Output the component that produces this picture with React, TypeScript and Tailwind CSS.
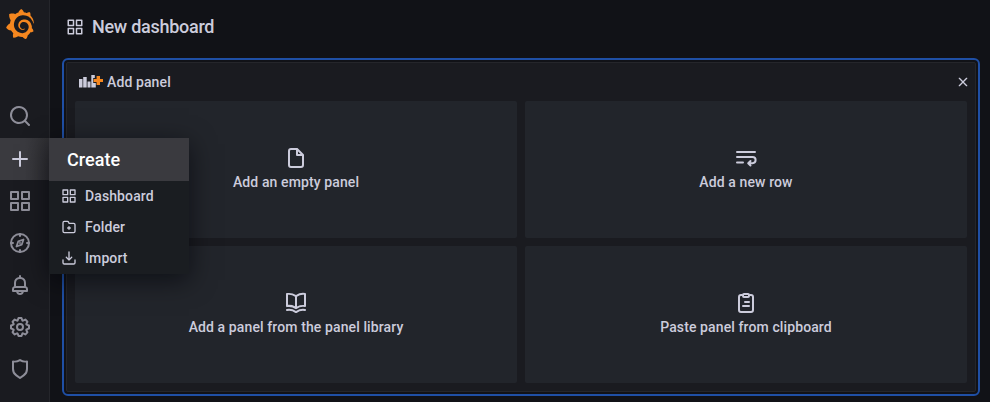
import type { ReactNode } from 'react';
import { SiGrafana } from 'react-icons/si';

const paths = {
  apps: 'M10,13H3a1,1,0,0,0-1,1v7a1,1,0,0,0,1,1h7a1,1,0,0,0,1-1V14A1,1,0,0,0,10,13ZM9,20H4V15H9ZM21,2H14a1,1,0,0,0-1,1v7a1,1,0,0,0,1,1h7a1,1,0,0,0,1-1V3A1,1,0,0,0,21,2ZM20,9H15V4h5Zm1,4H14a1,1,0,0,0-1,1v7a1,1,0,0,0,1,1h7a1,1,0,0,0,1-1V14A1,1,0,0,0,21,13Zm-1,7H15V15h5ZM10,2H3A1,1,0,0,0,2,3v7a1,1,0,0,0,1,1h7a1,1,0,0,0,1-1V3A1,1,0,0,0,10,2ZM9,9H4V4H9Z',
  search: 'M21.71,20.29,18,16.61A9,9,0,1,0,16.61,18l3.68,3.68a1,1,0,0,0,1.42,0A1,1,0,0,0,21.71,20.29ZM11,18a7,7,0,1,1,7-7A7,7,0,0,1,11,18Z',
  plus: 'M19,11H13V5a1,1,0,0,0-2,0v6H5a1,1,0,0,0,0,2h6v6a1,1,0,0,0,2,0V13h6a1,1,0,0,0,0-2Z',
  bell: 'M18,13.18V10a6,6,0,0,0-5-5.91V3a1,1,0,0,0-2,0V4.09A6,6,0,0,0,6,10v3.18A3,3,0,0,0,4,16v2a1,1,0,0,0,1,1H8.14a4,4,0,0,0,7.72,0H19a1,1,0,0,0,1-1V16A3,3,0,0,0,18,13.18ZM8,10a4,4,0,0,1,8,0v3H8Zm4,10a2,2,0,0,1-1.72-1h3.44A2,2,0,0,1,12,20Zm6-3H6V16a1,1,0,0,1,1-1H17a1,1,0,0,1,1,1Z',
  cog: 'M21.32,9.55l-1.89-.63.89-1.78A1,1,0,0,0,20.13,6L18,3.87a1,1,0,0,0-1.15-.19l-1.78.89-.63-1.89A1,1,0,0,0,13.5,2h-3a1,1,0,0,0-.95.68L8.92,4.57,7.14,3.68A1,1,0,0,0,6,3.87L3.87,6a1,1,0,0,0-.19,1.15l.89,1.78-1.89.63A1,1,0,0,0,2,10.5v3a1,1,0,0,0,.68.95l1.89.63-.89,1.78A1,1,0,0,0,3.87,18L6,20.13a1,1,0,0,0,1.15.19l1.78-.89.63,1.89a1,1,0,0,0,.95.68h3a1,1,0,0,0,.95-.68l.63-1.89,1.78.89A1,1,0,0,0,18,20.13L20.13,18a1,1,0,0,0,.19-1.15l-.89-1.78,1.89-.63A1,1,0,0,0,22,13.5v-3A1,1,0,0,0,21.32,9.55ZM20,12.78l-1.2.4A2,2,0,0,0,17.64,16l.57,1.14-1.1,1.1L16,17.64a2,2,0,0,0-2.79,1.16l-.4,1.2H11.22l-.4-1.2A2,2,0,0,0,8,17.64l-1.14.57-1.1-1.1L6.36,16A2,2,0,0,0,5.2,13.18L4,12.78V11.22l1.2-.4A2,2,0,0,0,6.36,8L5.79,6.89l1.1-1.1L8,6.36A2,2,0,0,0,10.82,5.2l.4-1.2h1.56l.4,1.2A2,2,0,0,0,16,6.36l1.14-.57,1.1,1.1L17.64,8a2,2,0,0,0,1.16,2.79l1.2.4ZM12,8a4,4,0,1,0,4,4A4,4,0,0,0,12,8Zm0,6a2,2,0,1,1,2-2A2,2,0,0,1,12,14Z',
  shield: 'M19.63,3.65a1,1,0,0,0-.84-.2,8,8,0,0,1-6.22-1.27,1,1,0,0,0-1.14,0A8,8,0,0,1,5.21,3.45a1,1,0,0,0-.84.2A1,1,0,0,0,4,4.43v7.45a9,9,0,0,0,3.77,7.33l3.65,2.6a1,1,0,0,0,1.16,0l3.65-2.6A9,9,0,0,0,20,11.88V4.43A1,1,0,0,0,19.63,3.65ZM18,11.88a7,7,0,0,1-2.93,5.7L12,19.77,8.93,17.58A7,7,0,0,1,6,11.88V5.58a10,10,0,0,0,6-1.39,10,10,0,0,0,6,1.39Z',
  download: 'M21,14a1,1,0,0,0-1,1v4a1,1,0,0,1-1,1H5a1,1,0,0,1-1-1V15a1,1,0,0,0-2,0v4a3,3,0,0,0,3,3H19a3,3,0,0,0,3-3V15A1,1,0,0,0,21,14Zm-9.71,1.71a1,1,0,0,0,.33.21.94.94,0,0,0,.76,0,1,1,0,0,0,.33-.21l4-4a1,1,0,0,0-1.42-1.42L13,12.59V3a1,1,0,0,0-2,0v9.59l-2.29-2.3a1,1,0,1,0-1.42,1.42Z',
  folder: 'M14,12.5H13v-1a1,1,0,0,0-2,0v1H10a1,1,0,0,0,0,2h1v1a1,1,0,0,0,2,0v-1h1a1,1,0,0,0,0-2Zm5-7H12.72l-.32-1a3,3,0,0,0-2.84-2H5a3,3,0,0,0-3,3v13a3,3,0,0,0,3,3H19a3,3,0,0,0,3-3V8.5A3,3,0,0,0,19,5.5Zm1,13a1,1,0,0,1-1,1H5a1,1,0,0,1-1-1V5.5a1,1,0,0,1,1-1H9.56a1,1,0,0,1,.95.68l.54,1.64A1,1,0,0,0,12,7.5h7a1,1,0,0,1,1,1Z',
  file: 'M20,8.94a1.31,1.31,0,0,0-.06-.27l0-.09a1.07,1.07,0,0,0-.19-.28h0l-6-6h0a1.07,1.07,0,0,0-.28-.19l-.09,0L13.06,2H7A3,3,0,0,0,4,5V19a3,3,0,0,0,3,3H17a3,3,0,0,0,3-3V9S20,9,20,8.94ZM14,5.41,16.59,8H14ZM18,19a1,1,0,0,1-1,1H7a1,1,0,0,1-1-1V5A1,1,0,0,1,7,4h5V9a1,1,0,0,0,1,1h5Z',
  book: 'M21.17,2.06A13.1,13.1,0,0,0,19,1.87a12.94,12.94,0,0,0-7,2.05,12.94,12.94,0,0,0-7-2,13.1,13.1,0,0,0-2.17.19,1,1,0,0,0-.83,1v12a1,1,0,0,0,1.17,1,10.9,10.9,0,0,1,8.25,1.91l.12.07.11,0a.91.91,0,0,0,.7,0l.11,0,.12-.07A10.9,10.9,0,0,1,20.83,16,1,1,0,0,0,22,15V3A1,1,0,0,0,21.17,2.06ZM11,15.35a12.87,12.87,0,0,0-6-1.48c-.33,0-.66,0-1,0v-10a8.69,8.69,0,0,1,1,0,10.86,10.86,0,0,1,6,1.8Zm9-1.44c-.34,0-.67,0-1,0a12.87,12.87,0,0,0-6,1.48V5.67a10.86,10.86,0,0,1,6-1.8,8.69,8.69,0,0,1,1,0Zm1.17,4.15A13.1,13.1,0,0,0,19,17.87a12.94,12.94,0,0,0-7,2.05,12.94,12.94,0,0,0-7-2.05,13.1,13.1,0,0,0-2.17.19A1,1,0,0,0,2,19.21a1,1,0,0,0,1.17.79,10.9,10.9,0,0,1,8.25,1.91,1,1,0,0,0,1.16,0A10.9,10.9,0,0,1,20.83,20,1,1,0,0,0,22,19.21,1,1,0,0,0,21.17,18.06Z',
};

function Icon({ name, className }: { name: keyof typeof paths; className: string }) {
  return (
    <svg viewBox="0 0 24 24" fill="currentColor" className={className} aria-hidden="true">
      <path d={paths[name]} />
    </svg>
  );
}

function StrokeIcon({ className, children }: { className: string; children: ReactNode }) {
  return (
    <svg
      viewBox="0 0 24 24"
      fill="none"
      stroke="currentColor"
      strokeWidth="2"
      strokeLinecap="round"
      strokeLinejoin="round"
      className={className}
      aria-hidden="true"
    >
      {children}
    </svg>
  );
}

function NavItem({ children, active = false }: { children: ReactNode; active?: boolean }) {
  return (
    <div
      className={
        active
          ? 'flex h-[42px] items-center bg-linear-to-r from-[#3a3a3f] from-50% to-[#303034] pl-2 text-[#ccccdc]'
          : 'flex h-[42px] items-center pl-2 text-[#8e8e99]'
      }
    >
      {children}
    </div>
  );
}

function MenuItem({ icon, label }: { icon: keyof typeof paths; label: string }) {
  return (
    <div className="flex h-[31px] items-center gap-2 pb-0.5 pl-3">
      <Icon name={icon} className="size-4" />
      <span>{label}</span>
    </div>
  );
}

function Tile({ icon, label }: { icon: ReactNode; label: string }) {
  return (
    <button className="flex flex-col items-center justify-center rounded-xs bg-[#22252b] pb-px">
      {icon}
      <span className="mt-px leading-[22px]">{label}</span>
    </button>
  );
}

function PanelAddIcon() {
  return (
    <svg viewBox="0 0 24 16" className="h-4 w-6" aria-hidden="true">
      <g fill="#ccccdc">
        <rect x="0" y="5" width="3.5" height="8.5" />
        <rect x="4.2" y="3" width="3.5" height="10.5" />
        <rect x="8.5" y="7.5" width="3" height="6" />
        <path d="M12.3 1h3.5v3h-1.6v5h2.600v4.500h-4.500z" />
      </g>
      <path d="M17.600 2h3.400v3h3v3h-3v3h-3.400V8h-3V5h3z" fill="#f5871f" />
    </svg>
  );
}

export default function App() {
  return (
    <div className="flex h-[402px] w-[990px] overflow-hidden bg-[#111217] font-[Roboto,sans-serif] text-sm font-medium tracking-[0.11px] text-[#ccccdc]">
      <nav className="relative z-10 w-[50px] shrink-0 border-r border-[#25262b] bg-[#1a1b20]">
        <div className="flex h-[95px] pt-[9px] pl-[5px]">
          <SiGrafana className="size-[30px] text-[#f5871f]" />
        </div>
        <NavItem><Icon name="search" className="size-6" /></NavItem>
        <div className="mt-px">
          <NavItem active><Icon name="plus" className="size-6" /></NavItem>
        </div>
        <NavItem><Icon name="apps" className="size-6" /></NavItem>
        <NavItem>
          <StrokeIcon className="size-6">
            <circle cx="12" cy="12" r="9" />
            <path d="M12 3v2M12 19v2M3 12h2M19 12h2" />
            <path d="m15.500 8.500-1.800 5.200-5.200 1.800 1.800-5.200zM12 12h.01" strokeWidth="1.8" />
          </StrokeIcon>
        </NavItem>
        <NavItem><Icon name="bell" className="size-6" /></NavItem>
        <NavItem><Icon name="cog" className="size-6" /></NavItem>
        <NavItem><Icon name="shield" className="size-6" /></NavItem>
        <div className="absolute top-[138px] left-[49px] h-[136px] w-[140px] bg-[#1a1d21] shadow-[0_6px_24px_rgba(1,4,9,0.6)]">
          <div className="flex h-[43px] items-center bg-[#3a3a3f] pl-[18px] text-lg font-medium tracking-[0.05px] text-white">
            Create
          </div>
          <MenuItem icon="apps" label="Dashboard" />
          <MenuItem icon="folder" label="Folder" />
          <MenuItem icon="download" label="Import" />
        </div>
      </nav>

      <main className="flex grow flex-col">
        <header className="flex h-[58px] items-center gap-2 pb-[5px] pl-4 text-lg tracking-[-0.27px]">
          <Icon name="apps" className="size-[18px]" />
          <h1>New dashboard</h1>
        </header>
        <section className="ml-3 flex h-[338px] w-[918px] rounded-md border-2 border-[#1f4fa5] p-0.5">
          <div className="flex w-full flex-col rounded-xs border border-[#25262b] bg-[#1a1b20]">
            <div className="flex h-[38px] items-center justify-between pr-1 pl-3">
              <div className="flex items-center gap-1">
                <PanelAddIcon />
                <span>Add panel</span>
              </div>
              <StrokeIcon className="size-4">
                <path d="M6.500 6.500l11 11M17.500 6.500l-11 11" />
              </StrokeIcon>
            </div>
            <div className="grid h-[282px] grid-cols-[442px_442px] grid-rows-[137px_137px] gap-2 pl-2">
              <Tile icon={<Icon name="file" className="size-6" />} label="Add an empty panel" />
              <Tile
                icon={
                  <StrokeIcon className="size-6">
                    <path d="M3 6h18M3 11h15.500a2.500 2.500 0 0 1 0 6.200h-4M3 16.500h6M16.500 15l-2.300 2.200 2.300 2.300" />
                  </StrokeIcon>
                }
                label="Add a new row"
              />
              <Tile icon={<Icon name="book" className="size-6" />} label="Add a panel from the panel library" />
              <Tile
                icon={
                  <StrokeIcon className="size-6">
                    <path d="M8 4H7a2 2 0 0 0-2 2v13a2 2 0 0 0 2 2h10a2 2 0 0 0 2-2V6a2 2 0 0 0-2-2h-1" />
                    <path d="M10 3h4a1 1 0 0 1 1 1v1a1 1 0 0 1-1 1h-4a1 1 0 0 1-1-1V4a1 1 0 0 1 1-1zM11 11h4M9 15h6" />
                  </StrokeIcon>
                }
                label="Paste panel from clipboard"
              />
            </div>
          </div>
        </section>
      </main>
    </div>
  );
}
